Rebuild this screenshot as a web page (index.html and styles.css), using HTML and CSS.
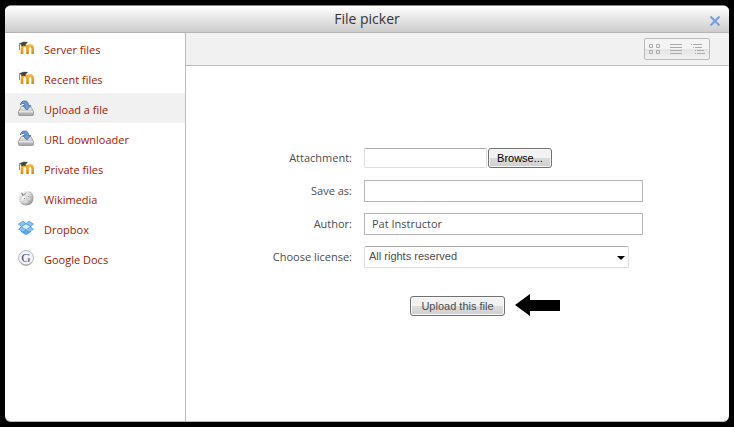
FILE: index.html
```html
<!DOCTYPE html>
<html lang="en">
<head>
    <meta charset="UTF-8">
    <meta name="viewport" content="width=device-width, initial-scale=1.0">
    <title>File picker</title>
    <link rel="stylesheet" href="styles.css">
</head>
<body>

    <!-- shared icons -->
    <svg class="sprite" aria-hidden="true">
        <defs>
            <linearGradient id="orange" x1="0" y1="0" x2="0" y2="1">
                <stop offset="0" stop-color="#f9b13c"/>
                <stop offset="1" stop-color="#e08a00"/>
            </linearGradient>
            <linearGradient id="silver" x1="0" y1="0" x2="0" y2="1">
                <stop offset="0" stop-color="#eeeeee"/>
                <stop offset="1" stop-color="#a4a4a4"/>
            </linearGradient>
            <radialGradient id="globe" cx="0.35" cy="0.35" r="0.7">
                <stop offset="0" stop-color="#fafafa"/>
                <stop offset="0.6" stop-color="#dcdcdc"/>
                <stop offset="1" stop-color="#909090"/>
            </radialGradient>
        </defs>
        <symbol id="moodle" viewBox="0 0 16 16">
            <path d="M4 14V8.500Q4 5.500 6.800 5.500Q9.500 5.500 9.500 8.500V14M9.500 8.500Q9.500 5.500 12 5.500Q14.700 5.500 14.700 8.500V14" fill="none" stroke="url(#orange)" stroke-width="2.700"/>
            <path d="M1 3.600L5.500 1.800L10 2L7.600 4.600L7.500 6.300Q5.500 5.200 3.500 6.600L3.300 4.800Z" fill="#444"/>
            <path d="M1.500 3.800V10" stroke="#777" stroke-width="0.800"/>
        </symbol>
        <symbol id="drive" viewBox="0 0 16 16">
            <path d="M3.200 6.500H12.800L15.500 11.500V14.500Q15.500 15.500 14.500 15.500H1.500Q0.500 15.500 0.500 14.500V11.500Z" fill="url(#silver)" stroke="#909090" stroke-width="0.800"/>
            <path d="M1 11.800H15" stroke="#fff" stroke-width="0.800"/>
            <path d="M2.500 5Q3 0.800 7 1Q10.500 1.200 10.500 5.500H12.800L8.800 10L4.800 5.500H7.200Q7 3.200 5 3.200Q3.500 3.200 2.500 5Z" fill="#6d9bd2" stroke="#3c6caa" stroke-width="0.800"/>
        </symbol>
        <symbol id="wikimedia" viewBox="0 0 16 16">
            <path d="M3 2.500L5 3L7 0.800L9 1.800L12 1.200Q15.800 4 15.500 8.500Q14.500 15.500 8 15.600Q1 15 0.500 8Q0.800 4.500 3 2.500Z" fill="url(#globe)"/>
            <path d="M3.500 3Q5 4 4.500 6L7.500 5.500V3L9.500 2M4.500 6L2 9.500M7.500 5.500L9 9L5.500 11L4.500 14M9 9L12.500 8L14.500 10M12.500 8L11.500 4.500M9 9L10.500 13" fill="none" stroke="#b4b4b4" stroke-width="0.500"/>
            <path d="M3.500 2.800Q5 4 4.600 5.500L7.500 3.500M6 8L7 9M10 6L10.800 7.200M11 10.500L12 11.500" fill="none" stroke="#777" stroke-width="0.900"/>
        </symbol>
        <symbol id="dropbox" viewBox="0 0 16 16">
            <path d="M5 0.800L8 3.300L11 0.800L16 4L13 6.700L16 9.300L13 11V12L8 15.300L3 12V11L0 9.300L3 6.700L0 4Z" fill="#4f9fe0"/>
            <path d="M5 1.500L7.500 3.500L3.200 6L1 4.200ZM11 1.500L15 4.200L12.800 6L8.500 3.500ZM3.200 7.300L7.500 9.800L5 11.600L1 9.200ZM12.800 7.300L15 9.200L11 11.600L8.500 9.800Z" fill="#86c4f4"/>
            <path d="M3.800 6.700L8 4.200L12.200 6.700L8 9.200Z" fill="#dff0fd"/>
            <path d="M8 10.500V14.800" stroke="#86c4f4" stroke-width="0.800"/>
        </symbol>
    </svg>

    <main class="dialog">
        <header class="titlebar">
            <h1>File picker</h1>
            <button type="button" class="close" aria-label="Close">
                <svg width="12" height="12" viewBox="0 0 12 12"><path d="M1.500 1.500L10.500 10.500M10.500 1.500L1.500 10.500" stroke="#7a9de8" stroke-width="2.200"/></svg>
            </button>
        </header>

        <div class="body">
            <nav class="repositories">
                <a href="#"><svg class="icon"><use href="#moodle"/></svg><span>Server files</span></a>
                <a href="#"><svg class="icon"><use href="#moodle"/></svg><span>Recent files</span></a>
                <a href="#" class="active"><svg class="icon"><use href="#drive"/></svg><span>Upload a file</span></a>
                <a href="#"><svg class="icon"><use href="#drive"/></svg><span>URL downloader</span></a>
                <a href="#"><svg class="icon"><use href="#moodle"/></svg><span>Private files</span></a>
                <a href="#"><svg class="icon"><use href="#wikimedia"/></svg><span>Wikimedia</span></a>
                <a href="#"><svg class="icon"><use href="#dropbox"/></svg><span>Dropbox</span></a>
                <a href="#">
                    <svg class="icon" viewBox="0 0 16 16">
                        <circle cx="8" cy="8" r="7.500" fill="#f4f4f8" stroke="#bbb"/>
                        <path d="M2 12Q8 18 14 12" fill="none" stroke="#999" stroke-width="0.800"/>
                        <text x="8" y="12" text-anchor="middle" class="g-letter">G</text>
                    </svg>
                    <span>Google Docs</span>
                </a>
            </nav>

            <section class="content">
                <div class="toolbar">
                    <div class="views">
                        <button type="button" aria-label="Icon view">
                            <svg width="12" height="12" viewBox="0 0 12 12" fill="none" stroke="#aaa"><path d="M0.500 1.500H3.500V4.500H0.500ZM7.500 1.500H10.500V4.500H7.500ZM0.500 7.500H3.500V10.500H0.500ZM7.500 7.500H10.500V10.500H7.500Z"/></svg>
                        </button>
                        <button type="button" aria-label="List view">
                            <svg width="12" height="12" viewBox="0 0 12 12" stroke="#aaa"><path d="M0 1.500H12M0 4.500H12M0 7.500H12M0 10.500H12"/></svg>
                        </button>
                        <button type="button" aria-label="Tree view">
                            <svg width="14" height="12" viewBox="0 0 14 12" stroke="#aaa"><path d="M0 1.500H1M2 1.500H11M2 4.500H3M4 4.500H11M4 7.500H5M6 7.500H13M4 10.500H5M6 10.500H14"/></svg>
                        </button>
                    </div>
                </div>

                <form class="upload">
                    <div class="fields">
                        <label for="attachment">Attachment:</label>
                        <div class="file">
                            <input type="text" id="attachment" readonly>
                            <button type="button" class="btn browse">Browse...</button>
                        </div>

                        <label for="saveas">Save as:</label>
                        <input type="text" id="saveas">

                        <label for="author">Author:</label>
                        <input type="text" id="author" value="Pat Instructor">

                        <label for="license">Choose license:</label>
                        <div class="select">
                            <select id="license">
                                <option>All rights reserved</option>
                            </select>
                        </div>
                    </div>

                    <div class="actions">
                        <button type="button" class="btn submit">Upload this file</button>
                        <svg class="pointer" width="46" height="22" viewBox="0 0 46 22"><path d="M0 11L15 0V6H45V17H15V22Z"/></svg>
                    </div>
                </form>
            </section>
        </div>
    </main>

</body>
</html>
```
FILE: styles.css
```css
* {
    box-sizing: border-box;
}
body {
    margin: 0;
    padding: 5px;
    min-height: 100vh;
    display: flex;
    background: #000;
    color: #4c4c4c;
    font-family: "Open Sans", "Noto Sans", sans-serif;
    font-size: 11px;
}
input,
select,
button {
    font-family: inherit;
    font-size: inherit;
    color: inherit;
}
.sprite {
    position: absolute;
    width: 0;
    height: 0;
}
.dialog {
    flex: 1;
    display: flex;
    flex-direction: column;
    background: #fff;
    border-top: 1px solid #888;
    border-bottom: 1px solid #bbb;
    border-radius: 6px;
    overflow: hidden;
}
.titlebar {
    position: relative;
    height: 27px;
    border-bottom: 1px solid #b5b5b5;
    background: linear-gradient(#fff, #ccc);
}
.titlebar h1 {
    margin: 0;
    color: #333;
    font-size: 14px;
    font-weight: normal;
    line-height: 26px;
    text-align: center;
}
.close {
    position: absolute;
    top: 9px;
    right: 8px;
    padding: 0;
    border: none;
    background: none;
}
.close svg {
    display: block;
}
.body {
    flex: 1;
    display: flex;
}
.repositories {
    width: 181px;
    border-right: 1px solid #bbb;
}
.repositories a {
    display: flex;
    align-items: center;
    gap: 10px;
    height: 30px;
    padding-left: 13px;
    color: #a52000;
    text-decoration: none;
}
.repositories span {
    padding-top: 2px;
}
.repositories .active {
    background: #f1f1f1;
}
.icon {
    width: 16px;
    height: 16px;
}
.g-letter {
    font-family: "Liberation Serif", serif;
    font-size: 13px;
    fill: #3b4f86;
}
.content {
    flex: 1;
}
.toolbar {
    display: flex;
    justify-content: flex-end;
    align-items: center;
    height: 33px;
    padding-right: 19px;
    border-bottom: 1px solid #bbb;
    background: #f1f1f1;
}
.views {
    display: flex;
    align-items: center;
    justify-content: center;
    gap: 9px;
    width: 66px;
    height: 22px;
    border: 1px solid #bbb;
    border-radius: 2px;
    background: linear-gradient(#f4f4f4 50%, #e4e4e4 50%, #f1f1f1);
}
.views button {
    padding: 0;
    border: none;
    background: none;
}
.views svg {
    display: block;
}
.upload {
    padding-top: 81px;
}
.fields {
    display: grid;
    grid-template-columns: 80px 279px;
    grid-auto-rows: 22px;
    gap: 11px 12px;
    justify-content: center;
    align-items: center;
}
.fields label {
    padding-bottom: 2px;
    text-align: right;
    white-space: nowrap;
}
.fields input {
    width: 100%;
    height: 22px;
    padding: 0 7px 2px;
    border: 1px solid #b5b5b5;
    background: #fff;
}
.file {
    display: flex;
    gap: 1px;
}
.fields .file input {
    width: 123px;
    height: 20px;
    border-color: #aaa #ddd #ddd;
    border-radius: 2px;
}
.btn {
    height: 20px;
    padding: 0;
    border: 1px solid #707070;
    border-radius: 3px;
    background: linear-gradient(#f2f2f2 50%, #dcdcdc 50%, #cfcfcf);
    box-shadow: inset 0 0 0 1px #f8f8f8;
    font-family: "Liberation Sans", Arial, sans-serif;
    line-height: 18px;
}
.browse {
    width: 64px;
    color: #000;
}
.select {
    position: relative;
    width: 265px;
}
.select select {
    display: block;
    width: 100%;
    height: 22px;
    padding: 0 20px 2px 4px;
    border: 1px solid #ddd;
    border-top-color: #aaa;
    border-radius: 2px;
    background: #fff;
    appearance: none;
    font-family: "Liberation Sans", Arial, sans-serif;
}
.select::after {
    content: "";
    position: absolute;
    top: 10px;
    right: 4px;
    border: 4px solid transparent;
    border-top-color: #000;
    border-bottom: none;
    pointer-events: none;
}
.actions {
    position: relative;
    display: flex;
    justify-content: center;
    margin-top: 28px;
}
.submit {
    width: 95px;
}
/* arrow hangs off the right side of the centred button */
.pointer {
    position: absolute;
    left: 50%;
    top: -2px;
    margin-left: 57px;
}
```
